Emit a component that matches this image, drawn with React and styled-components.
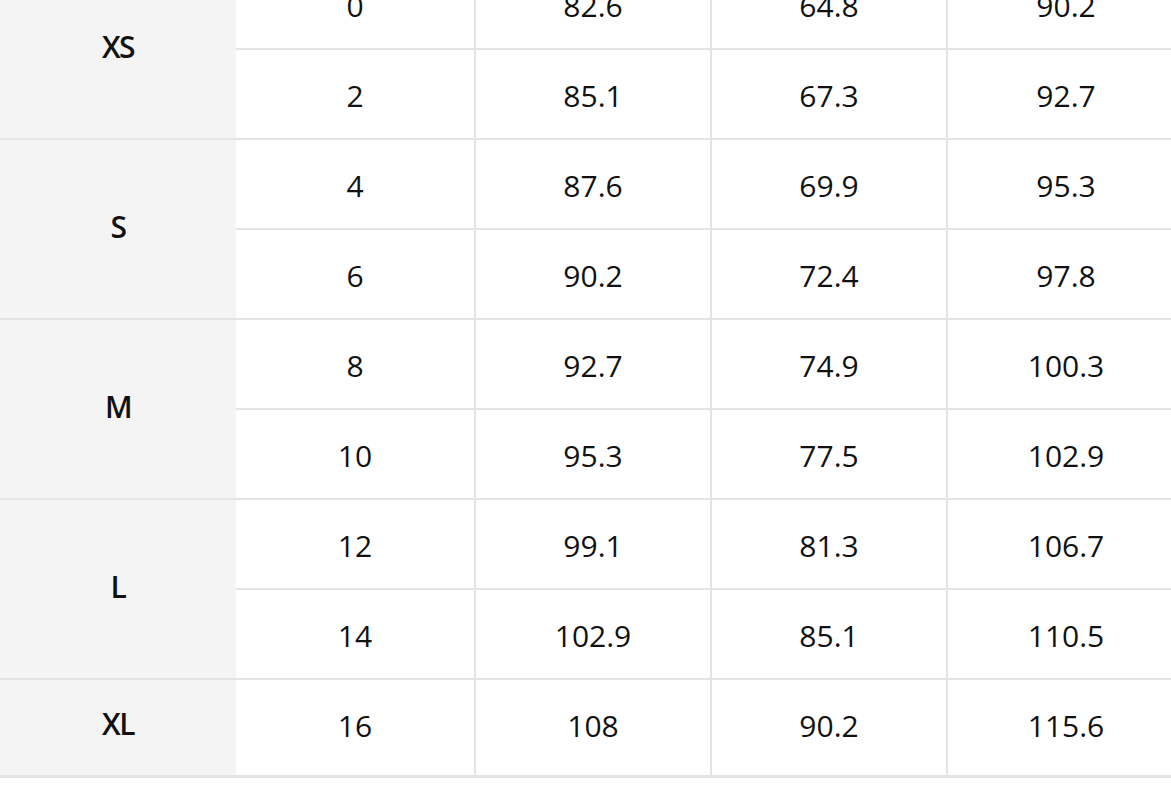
import React, { Fragment } from 'react'
import styled, { createGlobalStyle } from 'styled-components'

const GlobalStyle = createGlobalStyle`
  html, body {
    margin: 0;
    padding: 0;
    background: #fff;
    overflow: hidden;
  }
`

const sizes = [
  { label: 'XS', rows: [['0', '82.6', '64.8', '90.2'], ['2', '85.1', '67.3', '92.7']] },
  { label: 'S', rows: [['4', '87.6', '69.9', '95.3'], ['6', '90.2', '72.4', '97.8']] },
  { label: 'M', rows: [['8', '92.7', '74.9', '100.3'], ['10', '95.3', '77.5', '102.9']] },
  { label: 'L', rows: [['12', '99.1', '81.3', '106.7'], ['14', '102.9', '85.1', '110.5']] },
  { label: 'XL', rows: [['16', '108', '90.2', '115.6']] }
]

const Page = styled.div`
  width: 1171px;
  height: 792px;
  overflow: hidden;
`

const SizeGrid = styled.div`
  display: grid;
  grid-template-columns: 236px 240px 236px 236px 236px;
  grid-template-rows: repeat(8, 90px) 98px;
  width: 1184px;
  margin-top: -40px;
  font-family: 'Open Sans', 'Noto Sans', sans-serif;
  font-size: 30px;
  color: #111;
`

const Cell = styled.div`
  display: flex;
  align-items: center;
  justify-content: center;
  box-sizing: border-box;
  border-bottom: ${props => (props.last ? 3 : 2)}px solid #e4e4e4;
`

const SizeCell = styled(Cell)`
  grid-row: span ${props => props.span};
  background: #f4f4f4;
  font-weight: 600;
  letter-spacing: -1.5px;
  padding-bottom: ${props => (props.last ? 8 : 5)}px;
`

const ValueCell = styled(Cell)`
  font-weight: 400;
  padding-top: 2px;
  padding-bottom: ${props => (props.last ? 7 : 0)}px;
  border-right: ${props => (props.edge ? 0 : 2)}px solid #e4e4e4;
`

const App = () => (
  <Page>
    <GlobalStyle />
    <SizeGrid>
      {sizes.map((size, sizeIndex) => {
        const last = sizeIndex === sizes.length - 1
        return (
          <Fragment key={size.label}>
            {size.rows.map((row, rowIndex) => (
              <Fragment key={row[0]}>
                {rowIndex === 0 && (
                  <SizeCell span={size.rows.length} last={last}>
                    {size.label}
                  </SizeCell>
                )}
                {row.map((value, i) => (
                  <ValueCell key={i} edge={i === row.length - 1} last={last}>
                    {value}
                  </ValueCell>
                ))}
              </Fragment>
            ))}
          </Fragment>
        )
      })}
    </SizeGrid>
  </Page>
)

export default App
